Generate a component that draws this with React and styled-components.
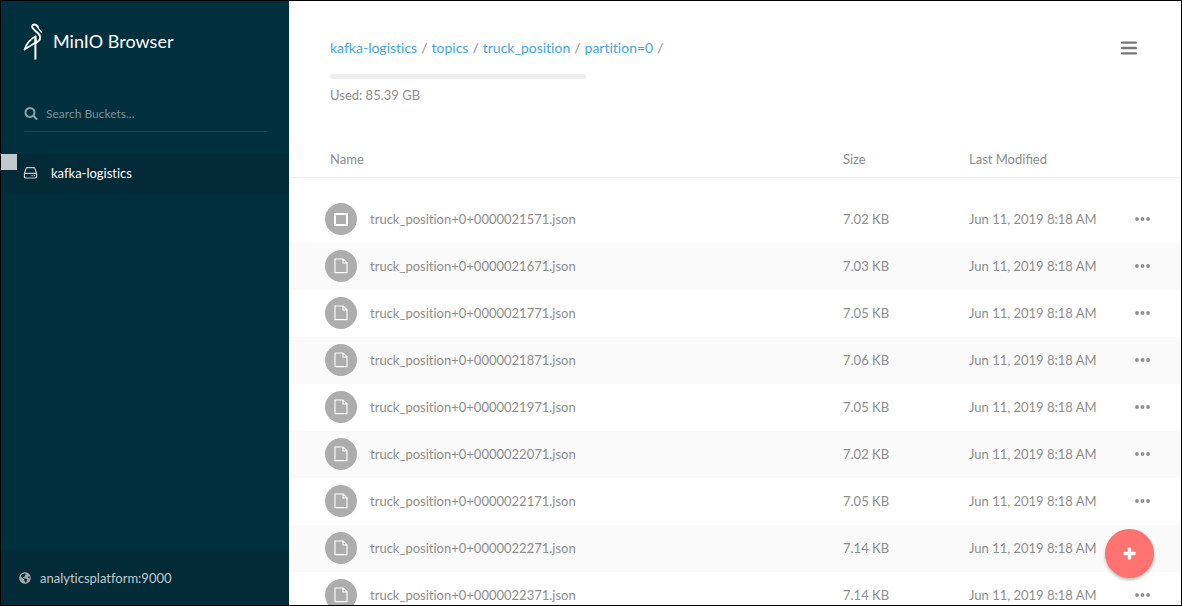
import React from 'react';
import styled, { createGlobalStyle } from 'styled-components';
import { FaGlobeAmericas } from 'react-icons/fa';

const GlobalStyle = createGlobalStyle`
  *, *::before, *::after { box-sizing: border-box; }
  body {
    margin: 0;
    background: #fff;
    color: #8e8e8e;
    font: 13px/20px Lato, "Liberation Sans", sans-serif;
    font-variant-ligatures: none;
  }
  button, input { font: inherit; color: inherit; }
  button { padding: 0; border: 0; background: none; cursor: pointer; }
`;

const Shell = styled.div`
  position: relative;
  display: flex;
  height: 100vh;
  border: 1px solid #000;
  overflow: hidden;
`;

const Sidebar = styled.aside`
  display: flex;
  flex-direction: column;
  flex: 0 0 288px;
  background: #002f3e;
  color: #fff;
`;

const Brand = styled.header`
  display: flex;
  align-items: center;
  gap: 10px;
  padding: 20px 22px 0;
  height: 60px;
`;

const BrandName = styled.h1`
  margin: 0;
  font-size: 18px;
  line-height: 24px;
  font-weight: 400;
`;

const Search = styled.label`
  display: flex;
  align-items: center;
  gap: 8px;
  height: 37px;
  margin: 34px 22px 22px 23px;
  border-bottom: 1px solid #1d4553;
  color: #8c9fa6;
`;

const SearchInput = styled.input`
  flex: 1;
  min-width: 0;
  padding: 2px 0 0;
  border: 0;
  outline: 0;
  background: none;
  font-size: 12px;
  &::placeholder { color: #7b919a; opacity: 1; }
`;

const BucketList = styled.ul`
  flex: 1;
  margin: 0;
  padding: 0;
  list-style: none;
`;

const BucketItem = styled.li`
  position: relative;
  background: #022a37;
`;

const BucketLink = styled.a`
  display: flex;
  align-items: center;
  gap: 13px;
  height: 39px;
  padding: 0 22px 1px;
  color: #fff;
  text-decoration: none;
`;

const BucketMarker = styled.span`
  position: absolute;
  top: 0;
  left: 0;
  width: 16px;
  height: 16px;
  background: #bfc9cd;
`;

const Host = styled.footer`
  display: flex;
  align-items: center;
  gap: 9px;
  height: 55px;
  padding: 0 18px;
  background: #022a37;
  color: #c0cacd;
  svg { color: #a5a5a5; }
`;

const Main = styled.main`
  display: flex;
  flex-direction: column;
  flex: 1;
  min-width: 0;
  overflow: hidden;
`;

const TopBar = styled.header`
  display: flex;
  justify-content: space-between;
  align-items: flex-start;
  padding: 37px 44px 0 41px;
`;

const Crumbs = styled.nav`
  display: flex;
  gap: 4px;
  font-size: 14px;
`;

const Crumb = styled.a`
  color: #46a5e0;
  text-decoration: none;
`;

const MenuButton = styled.button`
  display: flex;
  height: 20px;
  align-items: center;
`;

const Usage = styled.div`
  display: flex;
  flex-direction: column;
  gap: 6px;
  padding: 16px 41px 35px;
`;

const UsageTrack = styled.div`
  width: 256px;
  height: 5px;
  border-radius: 2px;
  background: #eee;
`;

const ObjectTable = styled.table`
  width: 100%;
  table-layout: fixed;
  border-collapse: collapse;
`;

const HeadCell = styled.th`
  width: ${(p) => p.$width || 'auto'};
  height: 37px;
  padding: ${(p) => (p.$first ? '2px 0 0 41px' : '2px 0 0')};
  border-bottom: 1px solid #eee;
  text-align: left;
  font-weight: 400;
  font-variant-ligatures: normal;
`;

const Body = styled.tbody`
  &::before {
    content: '';
    display: block;
    height: 18px;
  }
`;

const Row = styled.tr`
  height: 47px;
  background: ${(p) => (p.$striped ? '#fafafa' : '#fff')};
`;

const Cell = styled.td`
  padding: 0;
  white-space: nowrap;
`;

const NameCell = styled.div`
  display: flex;
  align-items: center;
  gap: 13px;
  padding-left: 36px;
`;

const Badge = styled.span`
  display: flex;
  align-items: center;
  justify-content: center;
  flex: none;
  width: 32px;
  height: 32px;
  border-radius: 50%;
  background: #adadad;
`;

const RowCheck = styled.input`
  appearance: none;
  width: 14px;
  height: 13px;
  margin: 0;
  border: 2px solid #fff;
  border-radius: 1px;
`;

const MoreButton = styled.button`
  display: flex;
  align-items: center;
  height: 20px;
`;

const AddButton = styled.button`
  position: absolute;
  right: 27px;
  bottom: 27px;
  display: flex;
  align-items: center;
  justify-content: center;
  width: 49px;
  height: 49px;
  border-radius: 50%;
  background: #ff726f;
  box-shadow: 0 2px 3px rgba(0, 0, 0, 0.25);
`;

const StorkLogo = () => (
  <svg width="20" height="38" viewBox="0 -1 20 38" fill="none" stroke="#fff" aria-hidden="true">
    <path d="M12.4 36.6V15.2" strokeWidth="2" />
    <path d="M1.6 26.6C3.6 19.6 8 15.6 12.6 13.2V19.6C9.6 21.8 5 23.6 1.6 26.6Z" strokeWidth="1.8" strokeLinejoin="round" />
    <path d="M12.4 20C16.8 18.2 18.2 15 16.6 12.2C15 9.6 11 7 9.6 5C8.4 3 10 1.4 11.8 1.4C13.2 1.4 14 2.4 14.8 3.6" strokeWidth="2" strokeLinecap="round" />
    <path d="M14 3.4L18.6 9.6" strokeWidth="1.2" strokeLinecap="round" />
  </svg>
);

const SearchIcon = () => (
  <svg width="14" height="14" viewBox="0 0 1792 1792" fill="currentColor" aria-hidden="true">
    <path d="M1216 832q0-185-131.5-316.5t-316.5-131.5-316.5 131.5-131.5 316.5 131.5 316.5 316.5 131.5 316.5-131.5 131.5-316.5zm512 832q0 52-38 90t-90 38q-54 0-90-38l-343-342q-179 124-399 124-143 0-273.5-55.5t-225-150-150-225-55.5-273.5 55.5-273.5 150-225 225-150 273.5-55.5 273.5 55.5 225 150 150 225 55.5 273.5q0 220-124 399l343 343q37 37 37 90z" />
  </svg>
);

const DriveIcon = () => (
  <svg width="15" height="14" viewBox="0 0 15 14" fill="none" stroke="#c3ccd0" strokeWidth="1.2" aria-hidden="true">
    <path d="M1.4 7.4L3.2 2.4Q3.5 1.6 4.4 1.6H10.6Q11.5 1.6 11.8 2.4L13.6 7.4V10.8Q13.6 12 12.4 12H2.6Q1.4 12 1.4 10.8ZM1.4 7.4H13.6" />
    <path d="M8.4 9.7H9.6M10.8 9.7H12" />
  </svg>
);

const FileIcon = () => (
  <svg width="14" height="16" viewBox="0 0 14 16" fill="none" stroke="#fff" strokeWidth="1.1" aria-hidden="true">
    <path d="M1 1H9.2L13 4.8V14.6H1ZM9 1V5H13" />
  </svg>
);

const MenuIcon = () => (
  <svg width="16" height="14" viewBox="0 0 16 14" fill="#777" aria-hidden="true">
    <rect y="0.4" width="16" height="2.4" rx="0.8" />
    <rect y="5.8" width="16" height="2.4" rx="0.8" />
    <rect y="11.2" width="16" height="2.4" rx="0.8" />
  </svg>
);

const DotsIcon = () => (
  <svg width="15" height="4" viewBox="0 0 15 4" fill="#8e8e8e" aria-hidden="true">
    <circle cx="2" cy="2" r="1.9" />
    <circle cx="7.5" cy="2" r="1.9" />
    <circle cx="13" cy="2" r="1.9" />
  </svg>
);

const PlusIcon = () => (
  <svg width="13" height="13" viewBox="0 0 13 13" fill="#fff" aria-hidden="true">
    <rect x="4.8" y="0.5" width="3.4" height="12" rx="0.8" />
    <rect x="0.5" y="4.8" width="12" height="3.4" rx="0.8" />
  </svg>
);

const crumbs = ['kafka-logistics', 'topics', 'truck_position', 'partition=0'];

const objects = [
  ['21571', '7.02'],
  ['21671', '7.03'],
  ['21771', '7.05'],
  ['21871', '7.06'],
  ['21971', '7.05'],
  ['22071', '7.02'],
  ['22171', '7.05'],
  ['22271', '7.14'],
  ['22371', '7.14'],
].map(([id, size]) => ({
  name: `truck_position+0+00000${id}.json`,
  size: `${size} KB`,
  modified: 'Jun 11, 2019 8:18 AM',
}));

export default function App() {
  return (
    <>
      <GlobalStyle />
      <Shell>
        <Sidebar>
          <Brand>
            <StorkLogo />
            <BrandName>MinIO Browser</BrandName>
          </Brand>
          <Search>
            <SearchIcon />
            <SearchInput type="text" placeholder="Search Buckets..." aria-label="Search Buckets" />
          </Search>
          <BucketList>
            <BucketItem>
              <BucketLink href="#kafka-logistics">
                <DriveIcon />
                kafka-logistics
              </BucketLink>
              <BucketMarker />
            </BucketItem>
          </BucketList>
          <Host>
            <FaGlobeAmericas size={12} />
            analyticsplatform:9000
          </Host>
        </Sidebar>
        <Main>
          <TopBar>
            <Crumbs aria-label="Path">
              {crumbs.map((crumb) => (
                <React.Fragment key={crumb}>
                  <Crumb href={`#${crumb}`}>{crumb}</Crumb>
                  <span>/</span>
                </React.Fragment>
              ))}
            </Crumbs>
            <MenuButton type="button" aria-label="Menu">
              <MenuIcon />
            </MenuButton>
          </TopBar>
          <Usage>
            <UsageTrack />
            <span>Used: 85.39 GB</span>
          </Usage>
          <ObjectTable>
            <thead>
              <tr>
                <HeadCell $first>Name</HeadCell>
                <HeadCell $width="126px">Size</HeadCell>
                <HeadCell $width="166px">Last Modified</HeadCell>
                <HeadCell $width="46px" aria-label="Actions" />
              </tr>
            </thead>
            <Body>
              {objects.map((object, index) => (
                <Row key={object.name} $striped={index % 2 === 1}>
                  <Cell>
                    <NameCell>
                      <Badge>
                        {index === 0 ? (
                          <RowCheck type="checkbox" aria-label={`Select ${object.name}`} />
                        ) : (
                          <FileIcon />
                        )}
                      </Badge>
                      {object.name}
                    </NameCell>
                  </Cell>
                  <Cell>{object.size}</Cell>
                  <Cell>{object.modified}</Cell>
                  <Cell>
                    <MoreButton type="button" aria-label={`Actions for ${object.name}`}>
                      <DotsIcon />
                    </MoreButton>
                  </Cell>
                </Row>
              ))}
            </Body>
          </ObjectTable>
        </Main>
        <AddButton type="button" aria-label="Add">
          <PlusIcon />
        </AddButton>
      </Shell>
    </>
  );
}
